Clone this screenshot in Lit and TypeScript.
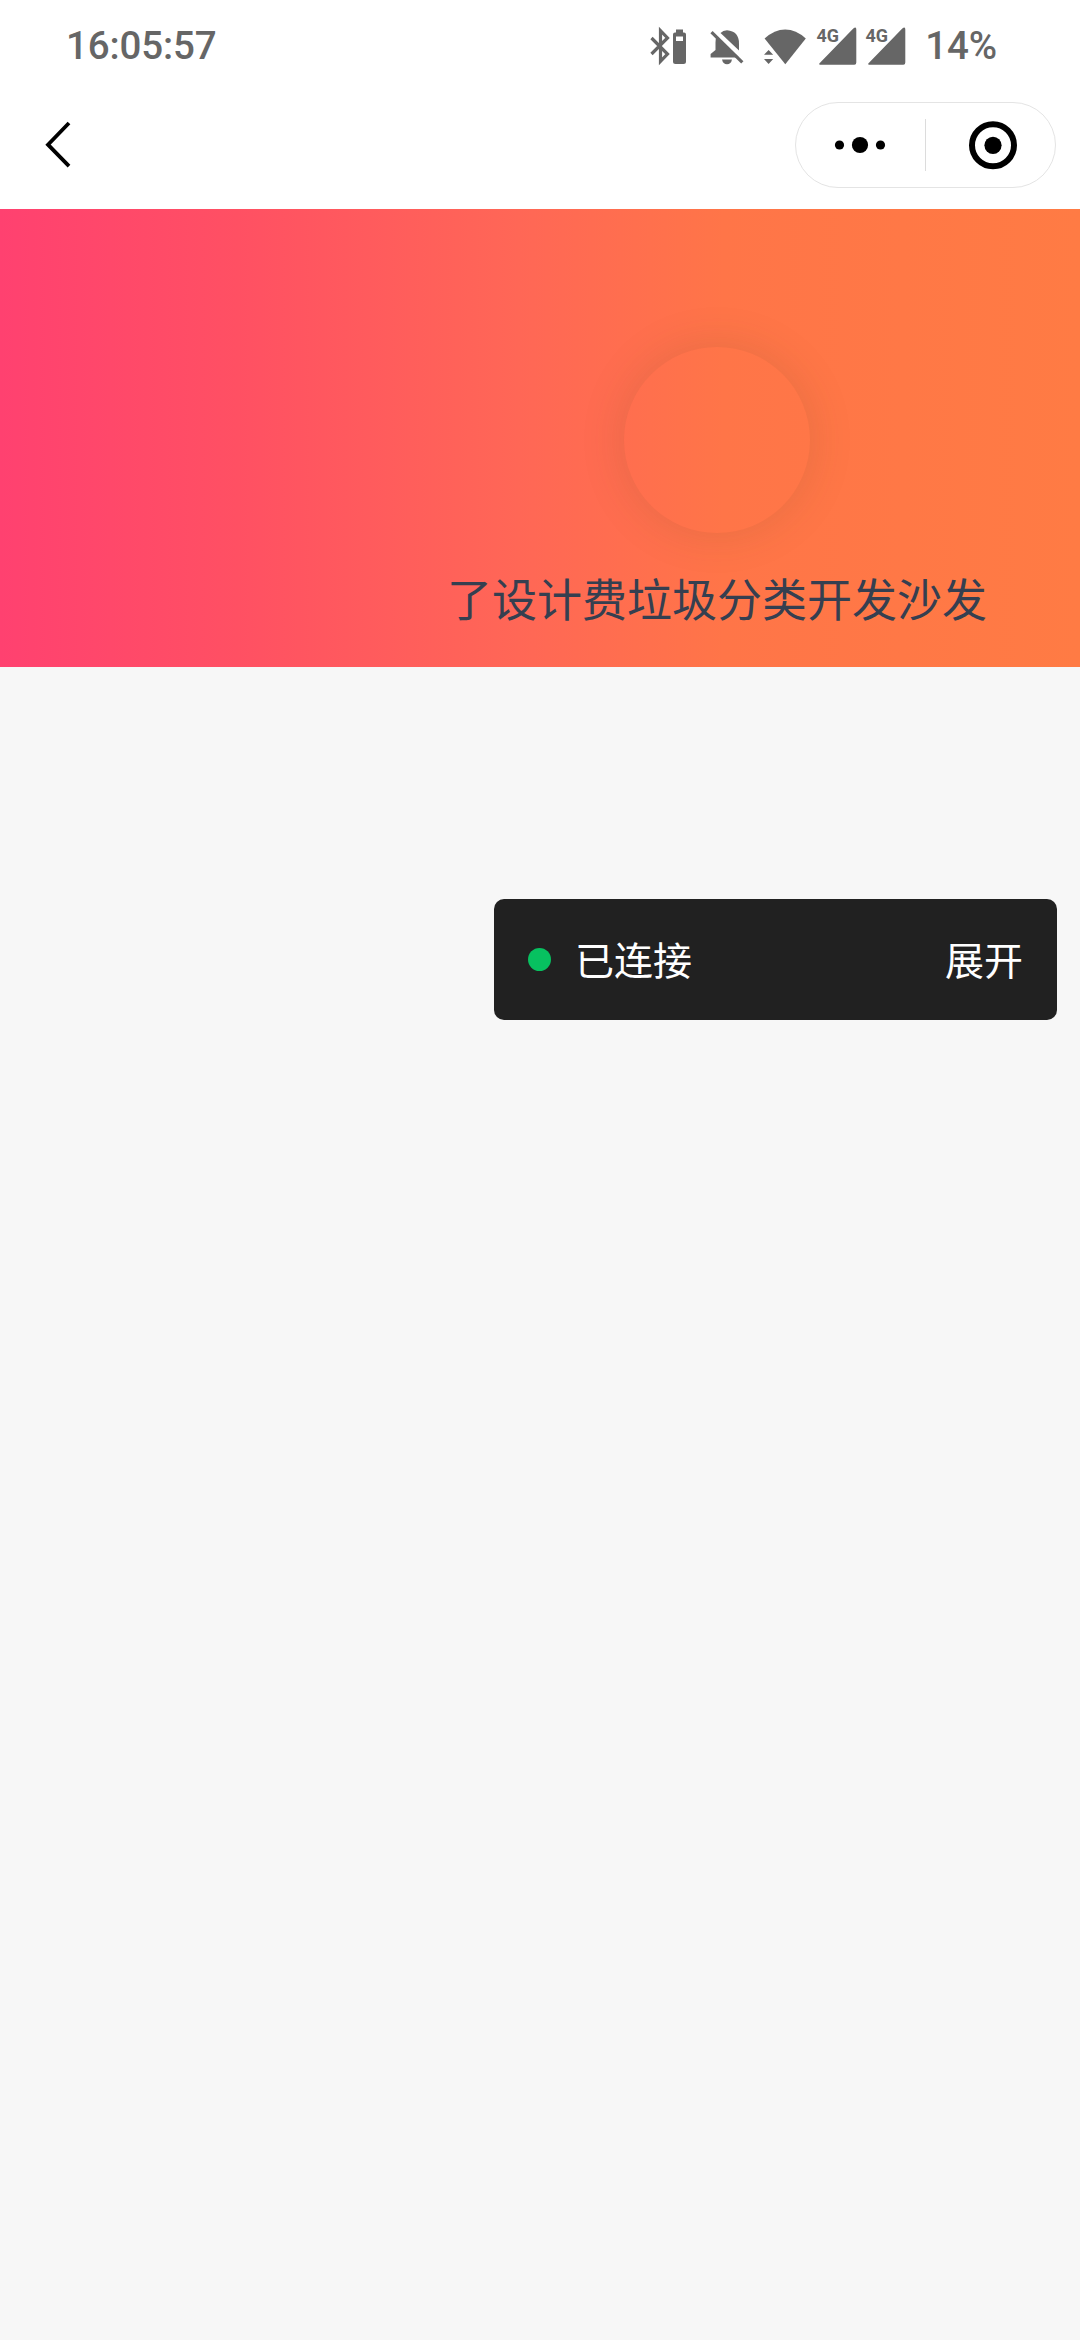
import { LitElement, html, css, svg } from "lit";
import { customElement } from "lit/decorators.js";

const signal = (x: number) => svg`
  <path d="M${x + 1} 47.6 L${x + 34.5} 13 Q${x + 37.5} 10.6 ${x + 37.5} 14 V47 Q${x + 37.5} 49.3 ${x + 35.5} 49.3 H${x + 2} Q${x - 0.6} 49.3 ${x + 1} 47.2 Z"/>
  <text class="net" x="${x - 2.2}" y="26" textLength="22.5" lengthAdjust="spacingAndGlyphs">4G</text>`;

@customElement("status-bar")
export class StatusBar extends LitElement {
  static styles = css`
    :host {
      display: flex;
      justify-content: space-between;
      align-items: center;
      height: 91px;
      padding: 0 83px 0 66px;
      box-sizing: border-box;
      color: #666;
      font: 500 38.5px/46px Roboto, sans-serif;
      letter-spacing: -0.15px;
    }
    .right { display: flex; align-items: center; gap: 18px; }
    .icons { display: block; width: 264px; height: 60px; fill: #666; }
    .net { font: 700 19px Roboto, sans-serif; letter-spacing: 0; }
  `;
  render() {
    return html`
      <span>16:05:57</span>
      <div class="right">
        <svg class="icons" viewBox="2 0.5 264 60">
          <path d="M10.5 22.5 L26.5 38.5 L19.5 45.8 V15.2 L26.5 22.5 L10.5 38.5" fill="none" stroke="#666" stroke-width="3.2"/>
          <path d="M35 14 H42 V17 H43 Q45 17 45 19 V46 Q45 48.5 42.5 48.5 H34.5 Q32 48.5 32 46 V19 Q32 17 34 17 H35 Z M35 21 V25.5 H42 V21 Z" fill-rule="evenodd"/>
          <path d="M75.5 21 L98.2 42 H69.6 V38.5 L74.5 34.5 V27 Q74.4 23.5 75.5 21 Z"/>
          <path d="M79.5 17.5 Q82 14.7 86 14.7 Q98 15.7 98 28 V35 Z"/>
          <path d="M81 44 H91 Q90 48.8 86 48.8 Q82 48.8 81 44 Z"/>
          <path d="M70.5 16.6 L101.3 46.8" stroke="#666" stroke-width="3.2"/>
          <path d="M123.6 23 Q133.5 14 144.2 14 Q155 14 164.8 23 L144.3 48.7 Z"/>
          <path d="M123 39.2 L127.6 34.4 L132.2 39.2 Z M123 43.4 H132.2 L127.6 48.4 Z"/>
          ${signal(177.8)}
          ${signal(226.8)}
        </svg>
        <span>14%</span>
      </div>
    `;
  }
}

@customElement("nav-bar")
export class NavBar extends LitElement {
  static styles = css`
    :host {
      display: flex;
      justify-content: space-between;
      align-items: flex-start;
      height: 118px;
      padding: 11px 24px 0 36px;
      box-sizing: border-box;
    }
    .back { width: 44px; height: 86px; }
    .capsule {
      display: flex;
      align-items: center;
      width: 261px;
      height: 86px;
      box-sizing: border-box;
      border: 1px solid #e4e4e4;
      border-radius: 43px;
    }
    .part { flex: 1; height: 84px; }
    .divider { width: 1px; height: 52px; background: #dcdcdc; }
  `;
  render() {
    return html`
      <svg class="back" viewBox="36 102 44 86">
        <path d="M69 123 L48 144.7 L69 166.2" fill="none" stroke="#000" stroke-width="3.8"/>
      </svg>
      <div class="capsule">
        <svg class="part" viewBox="0 0 129 84">
          <circle cx="43.5" cy="42" r="4.6"/>
          <circle cx="64" cy="42" r="8.1"/>
          <circle cx="84.5" cy="42" r="4.6"/>
        </svg>
        <div class="divider"></div>
        <svg class="part" viewBox="0 0 129 84">
          <circle cx="67" cy="42.3" r="21" fill="none" stroke="#000" stroke-width="6"/>
          <circle cx="67" cy="42.3" r="8.6"/>
        </svg>
      </div>
    `;
  }
}

@customElement("app-root")
export class AppRoot extends LitElement {
  static styles = css`
    :host {
      display: flex;
      flex-direction: column;
      min-height: 2340px;
      background: #f7f7f7;
      font-family: "Noto Sans CJK SC", sans-serif;
    }
    .top { background: #fff; }
    .banner {
      display: flex;
      flex-direction: column;
      align-items: center;
      height: 458px;
      padding: 138px 0 0 354px;
      box-sizing: border-box;
      background: linear-gradient(90deg, #ff4170 0%, #ff5063 22%, #ff6756 48%, #ff7548 67%, #ff7b44 100%);
    }
    .avatar {
      width: 186px;
      height: 186px;
      border-radius: 50%;
      box-shadow: 0 0 45px rgba(80, 70, 40, 0.15);
    }
    .name {
      margin-top: 32px;
      font-size: 45px;
      line-height: 66px;
      color: #353f50;
      white-space: nowrap;
    }
    .panel {
      display: flex;
      align-items: center;
      align-self: flex-end;
      width: 563px;
      height: 121px;
      margin: 232px 23px 0 0;
      padding: 0 34px;
      box-sizing: border-box;
      border-radius: 10px;
      background: #212121;
      color: #fff;
      font-size: 39px;
      line-height: 58px;
    }
    .label { padding-bottom: 4px; }
    .dot {
      width: 23px;
      height: 23px;
      margin-right: 24px;
      border-radius: 50%;
      background: #07c160;
    }
    .toggle { margin-left: auto; }
  `;
  render() {
    return html`
      <div class="top">
        <status-bar></status-bar>
        <nav-bar></nav-bar>
      </div>
      <div class="banner">
        <div class="avatar"></div>
        <div class="name">了设计费垃圾分类开发沙发</div>
      </div>
      <div class="panel">
        <span class="dot"></span>
        <span class="label">已连接</span>
        <span class="label toggle">展开</span>
      </div>
    `;
  }
}
